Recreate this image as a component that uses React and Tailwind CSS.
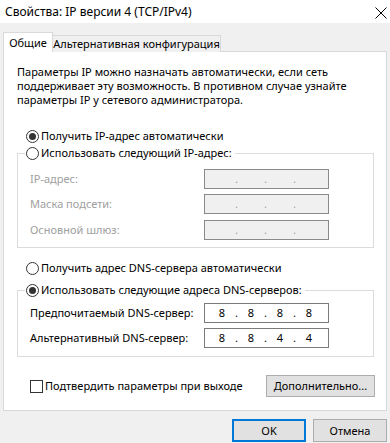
import React from 'react';

const Radio = ({ checked }) => (
  <span className="w-[13px] h-[13px] rounded-full border border-[#333333] bg-white flex items-center justify-center shrink-0">
    {checked && <span className="w-[7px] h-[7px] rounded-full bg-[#333333]" />}
  </span>
);

const RadioRow = ({ checked, label }) => (
  <div className="flex items-center gap-[2px] h-[16px] whitespace-nowrap">
    <Radio checked={checked} />
    <span>{label}</span>
  </div>
);

const IpBox = ({ octets, disabled }) => (
  <div
    className={
      disabled
        ? 'w-[125px] h-[20px] border border-[#8a8a8a] bg-[#f0f0f0] flex items-center pl-[7px] text-[#a0a0a0]'
        : 'w-[125px] h-[20px] border border-[#7a7a7a] bg-white flex items-center pl-[7px] text-black'
    }
  >
    {[0, 1, 2, 3].map((i) => (
      <React.Fragment key={i}>
        <span className="w-[20px] text-center">{octets ? octets[i] : ''}</span>
        {i < 3 && <span className="w-[9px] text-center">.</span>}
      </React.Fragment>
    ))}
  </div>
);

const FieldRow = ({ label, disabled, octets }) => (
  <div className="flex items-center whitespace-nowrap">
    <span className={disabled ? 'w-[174px] text-[#a0a0a0]' : 'w-[174px]'}>{label}</span>
    <IpBox disabled={disabled} octets={octets} />
  </div>
);

export default function App() {
  return (
    <div className="w-[390px] h-[443px] bg-[#f0f0f0] flex flex-col text-[11px] leading-[16px] text-black font-['Noto_Sans',sans-serif] overflow-hidden">
      {/* title bar */}
      <div className="h-[23px] bg-white flex items-center justify-between pl-[5px] pr-[2px] shrink-0">
        <span className="whitespace-nowrap text-[12px]">Свойства: IP версии 4 (TCP/IPv4)</span>
        <svg width="12" height="12" viewBox="0 0 12 12" className="mr-[1px] mt-[2px]">
          <path d="M0.5 0.5 L11.5 11.5 M11.5 0.5 L0.5 11.5" stroke="#000" strokeWidth="1" fill="none" />
        </svg>
      </div>

      {/* tabs */}
      <div className="flex items-end px-[3px] mt-[9px] h-[20px] relative z-10 shrink-0 whitespace-nowrap">
        <div className="h-[20px] w-[50px] bg-white border-x border-t border-[#d9d9d9] flex items-center justify-center pt-[1px]">
          Общие
        </div>
        <div className="h-[17px] w-[168px] bg-[#f0f0f0] border-t border-r border-[#d9d9d9] flex items-center justify-center">
          Альтернативная конфигурация
        </div>
      </div>

      {/* panel */}
      <div className="mx-[3px] -mt-px h-[360px] border border-[#d9d9d9] bg-white shrink-0">
        <p className="pt-[13px] pl-[13px] leading-[14px] whitespace-nowrap">
          Параметры IP можно назначать автоматически, если сеть
          <br />
          поддерживает эту возможность. В противном случае узнайте
          <br />
          параметры IP у сетевого администратора.
        </p>

        <div className="mt-[21px] pl-[22px]">
          <RadioRow checked label="Получить IP-адрес автоматически" />
        </div>

        <fieldset className="mt-[1px] ml-[13px] w-[357px] border border-[#dcdcdc] pt-[8px] pb-[7px]">
          <legend className="ml-[7px] pr-[3px] pl-[1px]">
            <RadioRow label="Использовать следующий IP-адрес:" />
          </legend>
          <div className="flex flex-col gap-[5px] pl-[12px]">
            <FieldRow label="IP-адрес:" disabled />
            <FieldRow label="Маска подсети:" disabled />
            <div className="mt-[1px]">
              <FieldRow label="Основной шлюз:" disabled />
            </div>
          </div>
        </fieldset>

        <div className="mt-[12px] pl-[22px]">
          <RadioRow label="Получить адрес DNS-сервера автоматически" />
        </div>

        <fieldset className="mt-[6px] ml-[13px] w-[357px] border border-[#dcdcdc] pt-[5px] pb-[8px]">
          <legend className="ml-[7px] pr-[3px] pl-[1px]">
            <RadioRow checked label="Использовать следующие адреса DNS-серверов:" />
          </legend>
          <div className="flex flex-col gap-[5px] pl-[12px]">
            <FieldRow label="Предпочитаемый DNS-сервер:" octets={['8', '8', '8', '8']} />
            <FieldRow label="Альтернативный DNS-сервер:" octets={['8', '8', '4', '4']} />
          </div>
        </fieldset>

        <div className="mt-[18px] pl-[26px] pr-[11px] flex items-center justify-between whitespace-nowrap">
          <label className="flex items-center gap-[2px]">
            <span className="w-[13px] h-[13px] border border-[#333333] bg-white shrink-0" />
            <span>Подтвердить параметры при выходе</span>
          </label>
          <button className="w-[109px] h-[22px] border border-[#adadad] bg-[#e1e1e1] flex items-center justify-center">
            Дополнительно...
          </button>
        </div>
      </div>

      {/* dialog buttons */}
      <div className="mt-[8px] pr-[3px] flex justify-end gap-[7px]">
        <button className="w-[74px] h-[23px] border-2 border-[#0078d7] bg-[#e1e1e1] flex items-center justify-center">
          OK
        </button>
        <button className="w-[74px] h-[23px] border border-[#adadad] bg-[#e1e1e1] flex items-center justify-center">
          Отмена
        </button>
      </div>
    </div>
  );
}
